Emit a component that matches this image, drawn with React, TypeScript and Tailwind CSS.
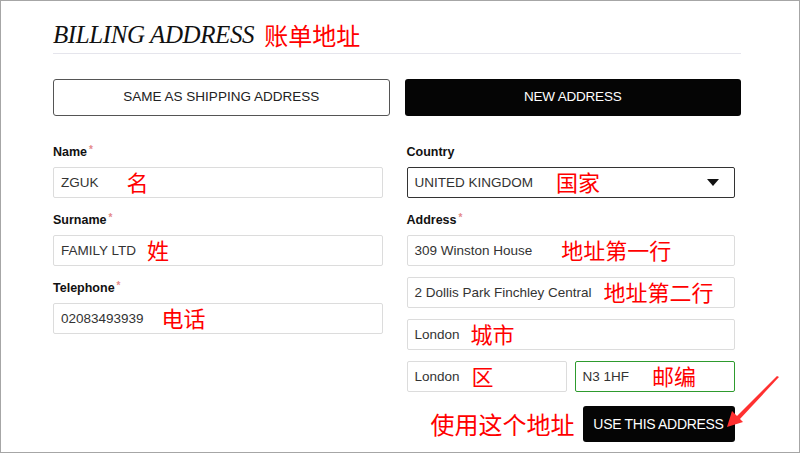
import React from 'react';

const sans = { fontFamily: '"Liberation Sans", Arial, "Noto Sans CJK SC", sans-serif' };
const cjk = { fontFamily: '"Noto Sans CJK SC", "Noto Sans", sans-serif' };

const Label = ({ text, required }: { text: string; required?: boolean }) => (
  <div className="h-4 mb-[7px] flex items-start text-[12.5px] font-bold text-[#111] leading-4">
    {text}
    {required && <span className="ml-[2px] text-[10px] leading-3 text-[#e58a8a]">*</span>}
  </div>
);

const Note = ({ text, ml }: { text: string; ml: string }) => (
  <span className={`${ml} -mt-[5px] text-[22px] leading-none text-[#ff0000]`} style={cjk}>
    {text}
  </span>
);

const Field = ({
  value,
  note,
  ml = 'ml-8',
  className = 'w-full',
  border = 'border-[#dcdcdc]',
}: {
  value: string;
  note?: string;
  ml?: string;
  className?: string;
  border?: string;
}) => (
  <div className={`${className} h-[31px] border ${border} rounded-[2px] flex items-center pl-[7px] pt-[2px] text-[13.5px] text-[#333]`}>
    <span>{value}</span>
    {note && <Note text={note} ml={ml} />}
  </div>
);

export default function App() {
  return (
    <div className="w-[800px] h-[453px] bg-white border border-[#a6a6a6] relative overflow-hidden" style={sans}>
      <div className="pl-[52px] pt-[20px]">
        <div className="flex items-end h-[26px]">
          <h1
            className="text-[25px] italic leading-none tracking-[-0.4px] text-[#111]"
            style={{ fontFamily: '"Liberation Serif", "Times New Roman", serif' }}
          >
            BILLING ADDRESS
          </h1>
          <span className="ml-[10px] text-[24px] leading-none text-[#ff0000]" style={cjk}>
            账单地址
          </span>
        </div>
        <div className="mt-[6px] h-[1px] w-[688px] bg-[#e5e5ec]" />

        <div className="mt-[25px] w-[688px] grid grid-cols-2 gap-[15px]">
          <button className="h-[37px] border border-[#555] rounded-[3px] text-[13.5px] text-[#222] uppercase">
            Same as shipping address
          </button>
          <button className="h-[37px] bg-[#050505] rounded-[3px] text-[13.5px] text-white uppercase tracking-[-0.2px]">
            New address
          </button>
        </div>

        <div className="mt-[28px] w-[688px] grid grid-cols-2 gap-[15px]">
          <div className="w-[330px] flex flex-col">
            <Label text="Name" required />
            <Field value="ZGUK" note="名" ml="ml-[28px]" />
            <div className="mt-[14px]">
              <Label text="Surname" required />
              <Field value="FAMILY LTD" note="姓" ml="ml-[11px]" />
            </div>
            <div className="mt-[14px]">
              <Label text="Telephone" required />
              <Field value="02083493939" note="电话" ml="ml-[18px]" />
            </div>
          </div>

          <div className="ml-[2px] w-[328px] flex flex-col">
            <Label text="Country" />
            <div className="h-[31px] border border-[#333] rounded-[2px] flex items-center pl-[7px] pt-[2px] pr-[15px] text-[13.5px] text-[#333]">
              <span>UNITED KINGDOM</span>
              <Note text="国家" ml="ml-[23px]" />
              <svg className="ml-auto -mt-[2px]" width="12" height="7" viewBox="0 0 12 7">
                <path d="M0 0 L12 0 L6 7 Z" fill="#111" />
              </svg>
            </div>
            <div className="mt-[14px]">
              <Label text="Address" required />
              <div className="flex flex-col gap-[11px]">
                <Field value="309 Winston House" note="地址第一行" ml="ml-[29px]" />
                <Field value="2 Dollis Park Finchley Central" note="地址第二行" ml="ml-[12px]" />
                <Field value="London" note="城市" ml="ml-[11px]" />
                <div className="flex gap-[8px]">
                  <Field value="London" note="区" ml="ml-[12px]" className="w-[160px]" />
                  <Field
                    value="N3 1HF"
                    note="邮编"
                    ml="ml-[23px]"
                    className="w-[160px]"
                    border="border-[#2e9b2e]"
                  />
                </div>
              </div>
            </div>
            <div className="mt-[14px] flex items-center justify-end">
              <span className="mr-[8px] text-[24px] leading-none text-[#ff0000]" style={cjk}>
                使用这个地址
              </span>
              <button className="w-[152px] h-[36px] bg-[#050505] rounded-[3px] text-[14px] text-white uppercase tracking-[-0.3px]">
                Use this address
              </button>
            </div>
          </div>
        </div>
      </div>

      <svg className="absolute left-[720px] top-[372px]" width="62" height="60" viewBox="0 0 62 60">
        <path d="M58 4 L56 3 L15 44 L18 47 Z" fill="#ff3030" />
        <path d="M6 54 L11 38 L22 49 Z" fill="#ff3030" />
      </svg>
    </div>
  );
}
